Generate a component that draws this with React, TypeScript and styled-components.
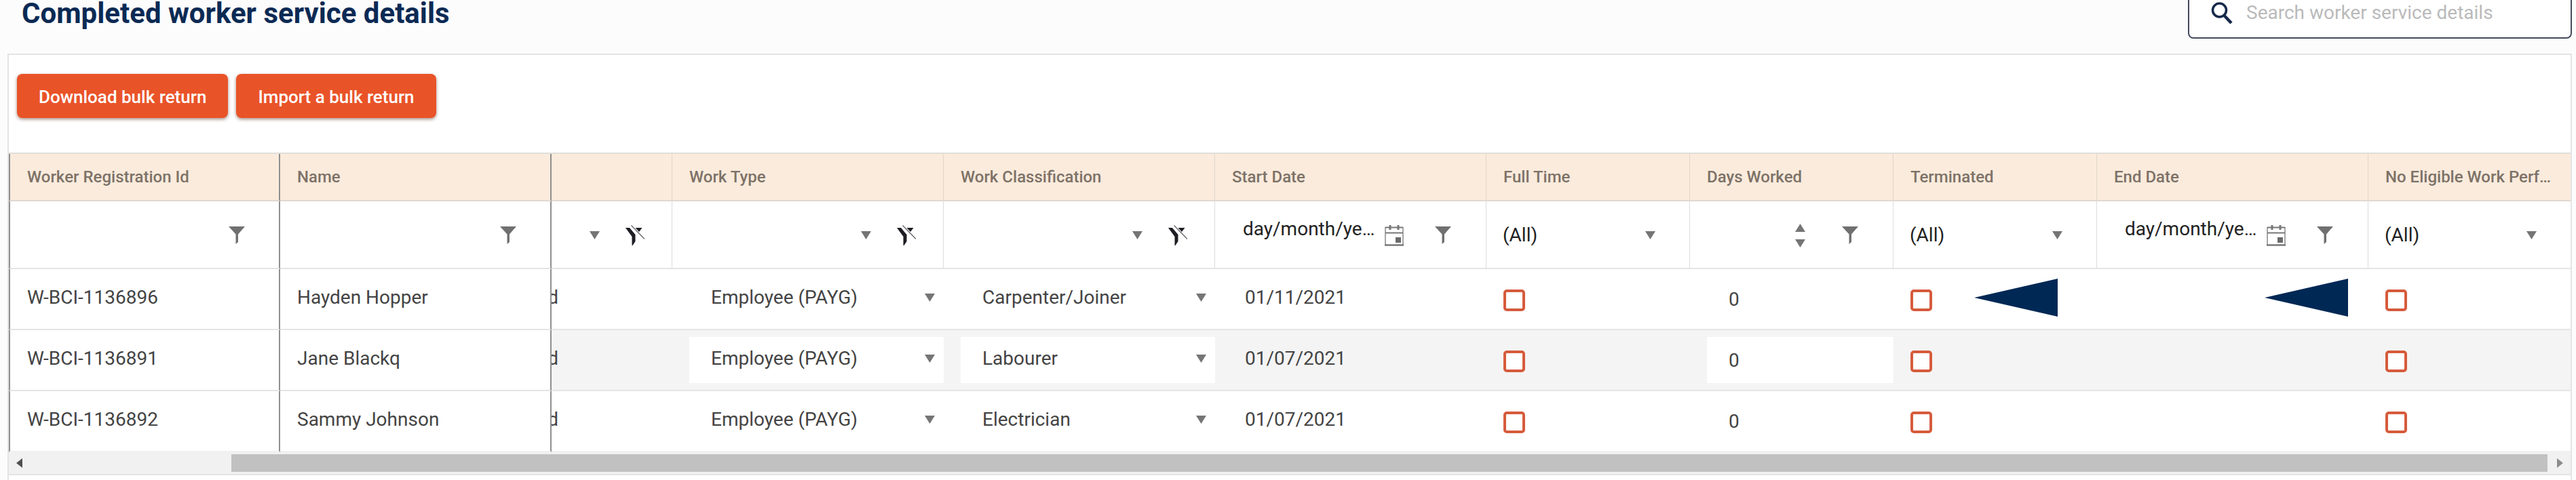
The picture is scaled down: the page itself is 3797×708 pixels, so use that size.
import React from "react";
import styled, { createGlobalStyle, css } from "styled-components";

const GlobalStyle = createGlobalStyle`
  *, *::before, *::after { box-sizing: border-box; }
  body {
    margin: 0;
    background: #fcfcfd;
    color: #444;
    font-family: Roboto, "Liberation Sans", sans-serif;
    font-size: 28px;
    line-height: 36px;
  }
  button, input, select { font: inherit; color: inherit; }
`;

const Page = styled.main`
  padding: 0 6px 0 11px;
`;

const PageHeader = styled.header`
  display: flex;
  align-items: flex-start;
  justify-content: space-between;
  height: 79px;
`;

const Title = styled.h1`
  margin: 0;
  padding-left: 21px;
  color: #0b2a54;
  font-size: 42px;
  line-height: 40px;
  font-weight: 700;
`;

const SearchBox = styled.label`
  display: flex;
  align-items: center;
  gap: 20px;
  width: 566px;
  height: 57px;
  padding: 0 32px 18px;
  border: 2px solid #434b5c;
  border-top: 0;
  border-radius: 0 0 8px 8px;
  background: #fff;
  color: #16294a;
`;

const SearchInput = styled.input`
  flex: 1;
  min-width: 0;
  padding: 0;
  border: 0;
  outline: 0;
  background: transparent;
  &::placeholder { color: #bababa; opacity: 1; }
`;

const Panel = styled.section`
  border: 2px solid #e4e4e4;
  border-bottom: 0;
  background: #fff;
`;

const Toolbar = styled.div`
  display: flex;
  gap: 12px;
  padding: 28px 12px 51px;
`;

const ActionButton = styled.button`
  height: 65px;
  padding: 2px 32px 0;
  border: 0;
  border-radius: 8px;
  background: #e95328;
  color: #fff;
  font-size: 26px;
  font-weight: 500;
  box-shadow: 0 2px 5px rgba(80, 30, 10, 0.5);
`;

const Grid = styled.table`
  width: 100%;
  table-layout: fixed;
  border-collapse: separate;
  border-spacing: 0;
  border-top: 2px solid #e0dfdc;
`;

const frozen = css`
  border-right: 2px solid #8f8f8f;
  &:first-child { border-left: 2px solid #8f8f8f; }
`;

const HeadCell = styled.th<{ $frozen?: boolean }>`
  height: 70px;
  padding: 0 22px 0 25px;
  border-right: 1px solid #dfd6cd;
  border-bottom: 2px solid #e2d8d1;
  background: #fbebdc;
  color: #7d7268;
  font-size: 24px;
  font-weight: 500;
  text-align: left;
  white-space: nowrap;
  overflow: hidden;
  text-overflow: ellipsis;
  &:last-child { border-right: 0; }
  ${(p) => p.$frozen && frozen}
`;

const FilterCell = styled.td<{ $frozen?: boolean }>`
  height: 100px;
  padding: 0;
  border-right: 1px solid #dcdcdc;
  border-bottom: 2px solid #e4e4e4;
  color: #222;
  &:last-child { border-right: 0; }
  ${(p) => p.$frozen && frozen}
`;

const FilterBar = styled.div<{ $inset: number }>`
  display: flex;
  align-items: center;
  justify-content: flex-end;
  height: 98px;
  padding: 2px ${(p) => p.$inset}px 0 24px;
`;

const FilterInput = styled.input`
  flex: 1;
  min-width: 0;
  width: 0;
  padding: 0;
  border: 0;
  outline: 0;
  background: transparent;
  text-overflow: ellipsis;
`;

const DateInput = styled(FilterInput)`
  height: 36px;
  margin: 0 14px 18px 17px;
  &::placeholder { color: #222; opacity: 1; }
`;

const FilterSelect = styled.select`
  flex: 1;
  min-width: 0;
  width: 0;
  height: 40px;
  padding: 0;
  border: 0;
  outline: 0;
  appearance: none;
  background: transparent;
`;

const IconButton = styled.button<{ $gap?: number }>`
  display: flex;
  flex: none;
  margin-left: ${(p) => p.$gap ?? 0}px;
  padding: 0;
  border: 0;
  background: transparent;
`;

const Spinner = styled.span`
  display: flex;
  flex-direction: column;
  gap: 11px;
`;

const BodyRow = styled.tr<{ $alt?: boolean }>`
  > td { background: ${(p) => (p.$alt ? "#f4f4f4" : "#fff")}; }
`;

const BodyCell = styled.td<{ $frozen?: boolean; $flush?: boolean }>`
  height: 90px;
  padding: 0 ${(p) => (p.$flush ? 0 : 25)}px 0 25px;
  border-bottom: 2px solid #e4e4e4;
  white-space: nowrap;
  ${(p) => p.$frozen && frozen}
  ${BodyRow} > &&& { ${(p) => p.$frozen && "background: #fff;"} }
  tr:last-child > & { border-bottom-color: #f1f1f1; }
`;

const TextCell = styled(BodyCell)`
  padding-bottom: 4px;
`;

const ClippedCell = styled(BodyCell)`
  padding: 0 0 4px;
`;

const ClippedText = styled.span`
  display: flex;
  justify-content: flex-end;
  width: 10px;
  overflow: hidden;
`;

const DateText = styled.span`
  padding-left: 19px;
`;

const EditBox = styled.div`
  display: flex;
  align-items: center;
  height: 68px;
  padding: 0 13px 4px 32px;
  background: #fff;
`;

const DaysInput = styled.input`
  width: 100%;
  height: 68px;
  padding: 0 32px;
  display: block;
  border: 0;
  outline: 0;
  background: #fff;
`;

const CheckLine = styled.div<{ $end?: boolean }>`
  display: flex;
  align-items: center;
  justify-content: ${(p) => (p.$end ? "flex-end" : "flex-start")};
  gap: 62px;
  padding-right: ${(p) => (p.$end ? 5 : 0)}px;
`;

const Tick = styled.input`
  appearance: none;
  width: 32px;
  height: 32px;
  margin: 4px 0 0;
  border: 4px solid #d65b3c;
  border-radius: 5px;
  background: #fff;
`;

const PointerShape = styled.svg`
  flex: none;
  width: 123px;
  height: 56px;
  margin-bottom: 4px;
`;

const Scrollbar = styled.div`
  display: flex;
  align-items: center;
  height: 32px;
  padding: 0 11px;
  background: #f1f1f1;
`;

const ScrollTrack = styled.div`
  flex: 1;
  margin: 0 14px 0 8px;
`;

const ScrollThumb = styled.div`
  height: 26px;
  margin-left: 300px;
  background: #c1c1c1;
`;

const Footer = styled.div`
  height: 9px;
  border-top: 2px solid #e4e4e4;
`;

const SearchIcon = () => (
  <svg width="32" height="32" viewBox="0 0 32 32" fill="none" stroke="currentColor" aria-hidden="true">
    <circle cx="12.5" cy="12" r="10" strokeWidth="3.500" />
    <path d="M19.5 20 30 31" strokeWidth="4.500" />
  </svg>
);

const Caret = ({ up }: { up?: boolean }) => (
  <svg width="15" height="12" viewBox="0 0 15 12" fill="#757575" aria-hidden="true">
    <path d={up ? "M0 12h15L7.500 0z" : "M0 0h15L7.500 12z"} />
  </svg>
);

const Funnel = () => (
  <svg width="24" height="26" viewBox="0 0 24 26" fill="#707070" aria-hidden="true">
    <path d="M0 0h24L14 11.500V23l-3.500 3V11.500z" />
  </svg>
);

const FunnelOff = () => (
  <svg width="28" height="30" viewBox="0 0 28 30" aria-hidden="true">
    <path d="M0 4h6l8.500 10v10l-4 6h-1V17z" fill="#1f1c24" />
    <path d="M14.500 4h10L20 10z" fill="#1f1c24" />
    <path d="M8.500.500 28 20.500" stroke="#66636b" strokeWidth="1.300" />
  </svg>
);

const Calendar = () => (
  <svg width="28" height="31" viewBox="0 0 28 31" fill="none" stroke="#777" aria-hidden="true">
    <path d="M1 3.500h26M1 11.500h26" strokeWidth="2" />
    <path d="M1 3v27M27 3v27" strokeWidth="1.300" />
    <path d="M0 29.500h28" strokeWidth="2.500" />
    <path d="M8 0v7M20 0v7" strokeWidth="3" />
    <path d="M16 18h8v8h-8z" fill="#6b6b6b" stroke="none" />
  </svg>
);

const Pointer = () => (
  <PointerShape viewBox="0 0 123 56" fill="#002855" aria-hidden="true">
    <path d="M0 28 123 0v56z" />
  </PointerShape>
);

const ScrollArrow = ({ right }: { right?: boolean }) => (
  <svg width="9" height="14" viewBox="0 0 9 14" fill={right ? "#8c8c8c" : "#505050"} aria-hidden="true">
    <path d={right ? "M0 0v14l9-7z" : "M9 0v14L0 7z"} />
  </svg>
);

const EditSelect = ({ label, value }: { label: string; value: string }) => (
  <EditBox>
    <FilterSelect aria-label={label} defaultValue={value}>
      <option>{value}</option>
    </FilterSelect>
    <Caret />
  </EditBox>
);

const FunnelButton = ({ label, gap }: { label: string; gap?: number }) => (
  <IconButton type="button" aria-label={`Filter ${label}`} $gap={gap}>
    <Funnel />
  </IconButton>
);

const TextFilter = ({ label }: { label: string }) => (
  <FilterBar $inset={50}>
    <FilterInput aria-label={label} />
    <FunnelButton label={label} />
  </FilterBar>
);

const ListFilter = ({ label }: { label: string }) => (
  <FilterBar $inset={40}>
    <FilterSelect aria-label={label} />
    <Caret />
    <IconButton type="button" aria-label={`Clear ${label}`} $gap={38}>
      <FunnelOff />
    </IconButton>
  </FilterBar>
);

const DateFilter = ({ label }: { label: string }) => (
  <FilterBar $inset={51}>
    <DateInput aria-label={label} placeholder="day/month/year" />
    <IconButton type="button" aria-label={`Pick ${label}`}>
      <Calendar />
    </IconButton>
    <FunnelButton label={label} gap={46} />
  </FilterBar>
);

const AllFilter = ({ label }: { label: string }) => (
  <FilterBar $inset={50}>
    <FilterSelect aria-label={label}>
      <option>(All)</option>
    </FilterSelect>
    <Caret />
  </FilterBar>
);

const NumberFilter = ({ label }: { label: string }) => (
  <FilterBar $inset={51}>
    <FilterInput aria-label={label} />
    <Spinner>
      <Caret up />
      <Caret />
    </Spinner>
    <FunnelButton label={label} gap={54} />
  </FilterBar>
);

const columns = [
  { title: "Worker Registration Id", width: 400, frozen: true, Filter: TextFilter },
  { title: "Name", width: 400, frozen: true, Filter: TextFilter },
  { title: "", width: 178, Filter: ListFilter },
  { title: "Work Type", width: 400, Filter: ListFilter },
  { title: "Work Classification", width: 400, Filter: ListFilter },
  { title: "Start Date", width: 400, Filter: DateFilter },
  { title: "Full Time", width: 300, Filter: AllFilter },
  { title: "Days Worked", width: 300, Filter: NumberFilter },
  { title: "Terminated", width: 300, Filter: AllFilter },
  { title: "End Date", width: 400, Filter: DateFilter },
  { title: "No Eligible Work Performed", width: 298, Filter: AllFilter },
];

const workers = [
  { id: "W-BCI-1136896", name: "Hayden Hopper", type: "Employee (PAYG)", job: "Carpenter/Joiner", start: "01/11/2021", days: 0, marked: true },
  { id: "W-BCI-1136891", name: "Jane Blackq", type: "Employee (PAYG)", job: "Labourer", start: "01/07/2021", days: 0, marked: false },
  { id: "W-BCI-1136892", name: "Sammy Johnson", type: "Employee (PAYG)", job: "Electrician", start: "01/07/2021", days: 0, marked: false },
];

export default function App() {
  return (
    <Page>
      <GlobalStyle />
      <PageHeader>
        <Title>Completed worker service details</Title>
        <SearchBox>
          <SearchIcon />
          <SearchInput type="search" aria-label="Search worker service details" placeholder="Search worker service details" />
        </SearchBox>
      </PageHeader>
      <Panel>
        <Toolbar>
          <ActionButton type="button">Download bulk return</ActionButton>
          <ActionButton type="button">Import a bulk return</ActionButton>
        </Toolbar>
        <Grid>
          <colgroup>
            {columns.map((c, i) => (
              <col key={i} width={c.width} />
            ))}
          </colgroup>
          <thead>
            <tr>
              {columns.map((c, i) => (
                <HeadCell key={i} scope="col" $frozen={c.frozen}>{c.title}</HeadCell>
              ))}
            </tr>
            <tr>
              {columns.map((c, i) => (
                <FilterCell key={i} $frozen={c.frozen}>
                  <c.Filter label={c.title || "Status"} />
                </FilterCell>
              ))}
            </tr>
          </thead>
          <tbody>
            {workers.map((w, i) => (
              <BodyRow key={w.id} $alt={i % 2 === 1}>
                <TextCell $frozen>{w.id}</TextCell>
                <TextCell $frozen>{w.name}</TextCell>
                <ClippedCell><ClippedText>d</ClippedText></ClippedCell>
                <BodyCell $flush><EditSelect label="Work Type" value={w.type} /></BodyCell>
                <BodyCell $flush><EditSelect label="Work Classification" value={w.job} /></BodyCell>
                <TextCell><DateText>{w.start}</DateText></TextCell>
                <BodyCell><CheckLine><Tick type="checkbox" aria-label="Full Time" /></CheckLine></BodyCell>
                <BodyCell $flush><DaysInput aria-label="Days Worked" defaultValue={w.days} /></BodyCell>
                <BodyCell>
                  <CheckLine>
                    <Tick type="checkbox" aria-label="Terminated" />
                    {w.marked && <Pointer />}
                  </CheckLine>
                </BodyCell>
                <BodyCell><CheckLine $end>{w.marked && <Pointer />}</CheckLine></BodyCell>
                <BodyCell><CheckLine><Tick type="checkbox" aria-label="No Eligible Work Performed" /></CheckLine></BodyCell>
              </BodyRow>
            ))}
          </tbody>
        </Grid>
        <Scrollbar>
          <IconButton type="button" aria-label="Scroll left"><ScrollArrow /></IconButton>
          <ScrollTrack><ScrollThumb /></ScrollTrack>
          <IconButton type="button" aria-label="Scroll right"><ScrollArrow right /></IconButton>
        </Scrollbar>
        <Footer />
      </Panel>
    </Page>
  );
}
